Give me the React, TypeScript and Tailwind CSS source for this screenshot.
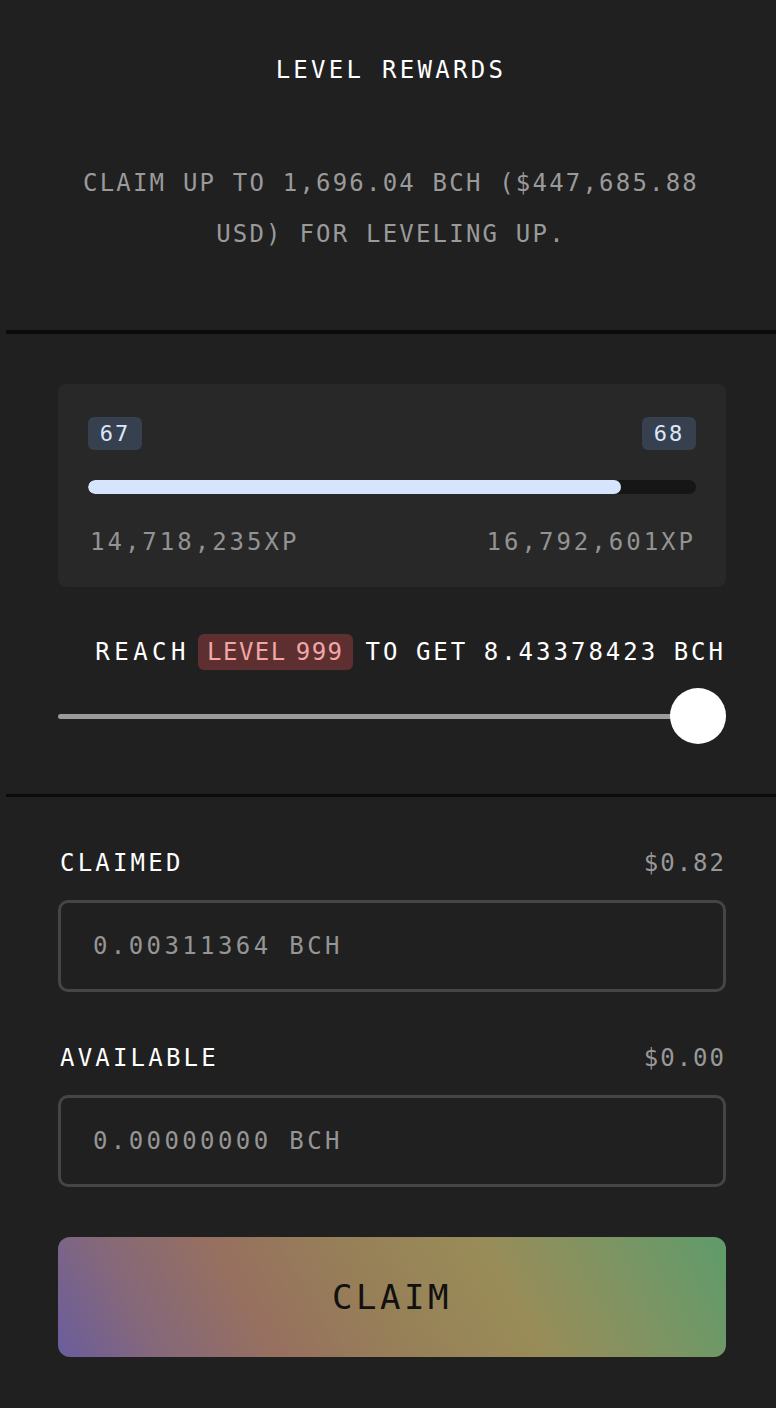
import React from "react"

const font = "font-['DejaVu_Sans_Mono','Liberation_Mono',monospace]"

function AmountRow({ label, usd, value }: { label: string; usd: string; value: string }) {
    return (
        <div className="flex flex-col">
            <div className="flex items-center justify-between h-[30px]">
                <span className="pl-[2px] text-[24px] leading-[30px] tracking-[3.2px] text-white">{label}</span>
                <span className="text-[24px] leading-[30px] tracking-[2px] text-[#989898]">{usd}</span>
            </div>
            <div className="mt-[22px] h-[92px] rounded-[10px] border-[3px] border-[#454545] flex items-center pl-[32px]">
                <span className="text-[24px] tracking-[3.4px] text-[#959595]">{value}</span>
            </div>
        </div>
    )
}

export default function App() {
    const progress = (621 - 88) / (696 - 88)

    return (
        <div className={`${font} min-h-[1408px] w-full bg-[#202020] pl-[6px]`}>
            {/* header */}
            <div className="h-[330px] flex flex-col items-center pt-[54px]">
                <h1 className="text-[24px] leading-[32px] tracking-[3.3px] text-white">LEVEL REWARDS</h1>
                <p className="mt-[72px] text-center text-[24px] leading-[51px] tracking-[2.2px] text-[#9a9a9a]">
                    CLAIM UP TO 1,696.04 BCH ($447,685.88
                    <br />
                    USD) FOR LEVELING UP.
                </p>
            </div>
            <div className="h-[4px] bg-[#0b0b0b]" />

            {/* level progress */}
            <div className="pl-[52px] pr-[50px] pt-[50px] pb-[50px]">
                <div className="h-[203px] rounded-[8px] bg-[#282828] px-[30px] pt-[33px]">
                    <div className="flex justify-between">
                        <span className="h-[33px] w-[54px] rounded-[6px] bg-[#36404f] flex items-center justify-center text-[22px] tracking-[2px] text-[#dce7fb]">
                            67
                        </span>
                        <span className="h-[33px] w-[54px] rounded-[6px] bg-[#36404f] flex items-center justify-center text-[22px] tracking-[2px] text-[#dce7fb]">
                            68
                        </span>
                    </div>
                    <div className="mt-[30px] h-[14px] rounded-full bg-[#161616] overflow-hidden">
                        <div className="h-full rounded-full bg-[#d6e4fd]" style={{ width: `${progress * 100}%` }} />
                    </div>
                    <div className="mt-[30px] flex justify-between text-[24px] tracking-[3px] text-[#939393]">
                        <span className="pl-[2px]">14,718,235XP</span>
                        <span>16,792,601XP</span>
                    </div>
                </div>

                <div className="mt-[47px] flex items-center justify-end h-[36px] text-[24px] text-white">
                    <span className="tracking-[4.5px]">REACH</span>
                    <span className="ml-[8px] h-[36px] rounded-[6px] bg-[#5d2f30] px-[9px] flex items-center tracking-[1.5px] [word-spacing:-7px] text-[#f2a6a6]">
                        LEVEL 999
                    </span>
                    <span className="ml-[13px] tracking-[3px] [word-spacing:-2px]">TO GET 8.43378423 BCH</span>
                </div>

                <div className="mt-[18px] relative h-[56px] flex items-center">
                    <div className="h-[5px] w-full rounded-full bg-[#9b9b9b]" />
                    <div className="absolute right-0 top-0 h-[56px] w-[56px] rounded-full bg-white" />
                </div>
            </div>
            <div className="h-[3px] bg-[#0b0b0b]" />

            {/* amounts */}
            <div className="pl-[52px] pr-[50px] pt-[51px] pb-[51px] flex flex-col">
                <AmountRow label="CLAIMED" usd="$0.82" value="0.00311364 BCH" />
                <div className="mt-[51px]">
                    <AmountRow label="AVAILABLE" usd="$0.00" value="0.00000000 BCH" />
                </div>
                <button className="mt-[50px] h-[120px] w-full rounded-[12px] bg-[linear-gradient(61deg,#6a5d9d_0%,#85687a_14%,#97705f_30%,#978058_48%,#998c58_66%,#7f9462_82%,#5f9b6b_100%)] flex items-center justify-center">
                    <span className="text-[34px] tracking-[3.5px] text-[#111111]">CLAIM</span>
                </button>
            </div>
        </div>
    )
}
